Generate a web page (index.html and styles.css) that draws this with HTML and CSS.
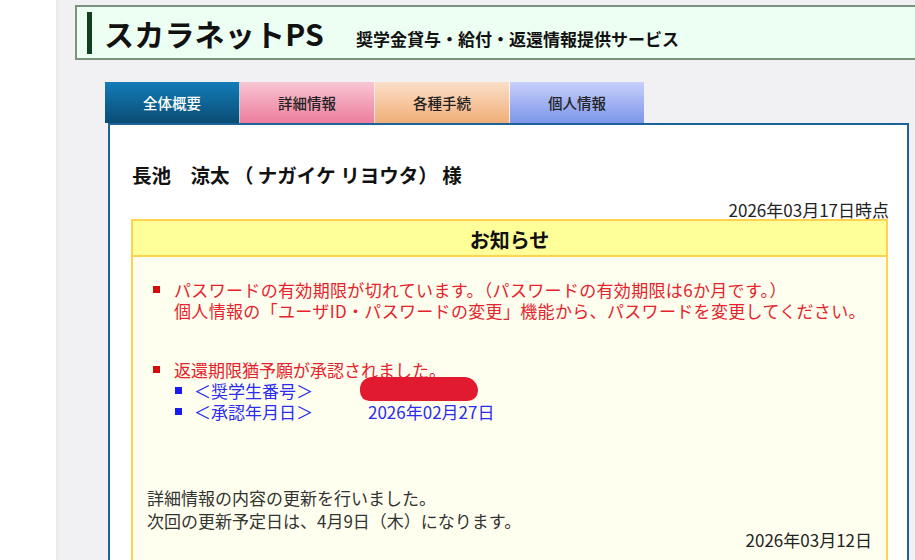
FILE: index.html
```html
<!DOCTYPE html>
<html lang="ja">
<head>
<meta charset="utf-8">
<title>スカラネットPS</title>
<link rel="stylesheet" href="styles.css">
</head>
<body>
<div class="side"></div>
<div class="main">
  <header class="site-header">
    <span class="bar"></span>
    <div class="titles">
      <h1 class="title">スカラネットPS</h1>
      <p class="subtitle">奨学金貸与・給付・返還情報提供サービス</p>
    </div>
  </header>

  <nav class="tabs">
    <a class="tab tab-overview">全体概要</a>
    <a class="tab tab-detail">詳細情報</a>
    <a class="tab tab-proc">各種手続</a>
    <a class="tab tab-personal">個人情報</a>
  </nav>

  <section class="panel">
    <h2 class="name">長池　涼太 （ ナガイケ リヨウタ） 様</h2>
    <p class="asof">2026年03月17日時点</p>

    <div class="notice">
      <div class="notice-head">お知らせ</div>
      <div class="notice-body">
        <ul class="alerts">
          <li class="alert">
            <div class="alert-text alert-wide">パスワードの有効期限が切れています。（パスワードの有効期限は6か月です。）<br>個人情報の「ユーザID・パスワードの変更」機能から、パスワードを変更してください。</div>
          </li>
          <li class="alert alert-gap">
            <div class="alert-text">返還期限猶予願が承認されました。
              <ul class="details">
                <li class="detail"><span class="lbl">＜奨学生番号＞</span><span class="val"><span class="redact"></span></span></li>
                <li class="detail"><span class="lbl">＜承認年月日＞</span><span class="val">2026年02月27日</span></li>
              </ul>
            </div>
          </li>
        </ul>
        <p class="update">詳細情報の内容の更新を行いました。<br>次回の更新予定日は、4月9日（木）になります。</p>
        <p class="update-date">2026年03月12日</p>
      </div>
    </div>
  </section>
</div>
</body>
</html>
```
FILE: styles.css
```css
html, body {
  margin: 0;
  padding: 0;
}
body {
  display: flex;
  background: #f1f1f3;
  font-family: "Noto Sans CJK JP", "Noto Sans", sans-serif;
  color: #222;
  height: 560px;
  overflow: hidden;
}
.side {
  width: 56px;
  flex: none;
  background: #fff;
  box-shadow: 1px 0 4px rgba(0, 0, 0, 0.05);
}
.main {
  flex: 1;
  min-width: 0;
  padding-left: 19px;
  padding-top: 5px;
  overflow: hidden;
}

/* header */
.site-header {
  display: flex;
  align-items: center;
  width: 900px;
  height: 51px;
  border: 2px solid #7b937d;
  background: #edfff2;
}
.bar {
  width: 5px;
  height: 42px;
  margin-left: 10px;
  background: #123f1e;
  flex: none;
}
.titles {
  display: flex;
  align-items: baseline;
  margin-left: 12px;
  margin-top: 1px;
}
.title {
  margin: 0;
  font-size: 30px;
  font-weight: 700;
  color: #111;
  line-height: 40px;
  letter-spacing: 0.2px;
}
.subtitle {
  margin: 0 0 0 32px;
  font-size: 17px;
  font-weight: 700;
  color: #111;
}

/* tabs */
.tabs {
  display: flex;
  margin: 22px 0 0 30px;
}
.tab {
  width: 134px;
  height: 41px;
  display: flex;
  align-items: center;
  justify-content: center;
  font-size: 14.5px;
  font-weight: 500;
  color: #222;
  border-right: 1px solid rgba(255, 255, 255, 0.7);
}
.tab-overview {
  background: linear-gradient(#127cb8, #0a4c74);
  color: #fff;
}
.tab-detail {
  background: linear-gradient(#f8c6d2, #ee7d9d);
}
.tab-proc {
  background: linear-gradient(#fbdfc8, #f1ae78);
}
.tab-personal {
  background: linear-gradient(#c8d0fb, #7d96ea);
  border-right: none;
}

/* panel */
.panel {
  margin-left: 33px;
  width: 757px;
  height: 600px;
  background: #fff;
  border: 2px solid #1b6399;
  border-bottom: none;
  padding: 0 19px 0 21px;
}
.name {
  margin: 37px 0 0 1px;
  font-size: 19.5px;
  font-weight: 700;
  line-height: 26px;
  color: #111;
}
.asof {
  margin: 12px -1px -1px 0;
  text-align: right;
  font-size: 17px;
  line-height: 20px;
  color: #222;
}

/* notice */
.notice {
  border: 2px solid #ffd24f;
  border-bottom: none;
  background: #ffffef;
}
.notice-head {
  height: 36px;
  padding-top: 2px;
  box-sizing: border-box;
  display: flex;
  align-items: center;
  justify-content: center;
  background: #ffff9a;
  border-bottom: 2px solid #ffd24f;
  font-size: 20px;
  font-weight: 700;
  color: #111;
}
.notice-body {
  padding: 22px 14px 20px 20px;
}
.alerts {
  list-style: none;
  margin: 0;
  padding: 0;
}
.alert {
  display: flex;
  color: #e6222c;
  font-size: 17px;
  line-height: 21px;
}
.alert::before {
  content: "";
  flex: none;
  width: 7px;
  height: 7px;
  margin-top: 7px;
  margin-right: 14px;
  background: #d30d0d;
}
.alert-wide {
  letter-spacing: 0.33px;
}
.alert-gap {
  margin-top: 38px;
}
.details {
  list-style: none;
  margin: 0;
  padding: 0 0 0 1px;
}
.detail {
  display: flex;
  align-items: center;
  height: 21px;
  color: #2b2bf2;
  line-height: 21px;
}
.detail::before {
  content: "";
  flex: none;
  width: 7px;
  height: 7px;
  margin-right: 12px;
  background: #1a1af5;
}
.lbl {
  width: 174px;
  flex: none;
}
.val {
  display: flex;
  align-items: center;
  height: 21px;
}
.redact {
  display: block;
  flex: none;
  width: 118px;
  height: 24px;
  margin-left: -8px;
  margin-bottom: 3px;
  background: #e11a30;
  border-radius: 14px 16px 12px 11px;
}
.update {
  margin: 64px 0 0 -6px;
  font-size: 17px;
  line-height: 23px;
  color: #333;
}
.update-date {
  margin: 0;
  text-align: right;
  font-size: 17px;
  line-height: 16px;
  color: #222;
}
```
